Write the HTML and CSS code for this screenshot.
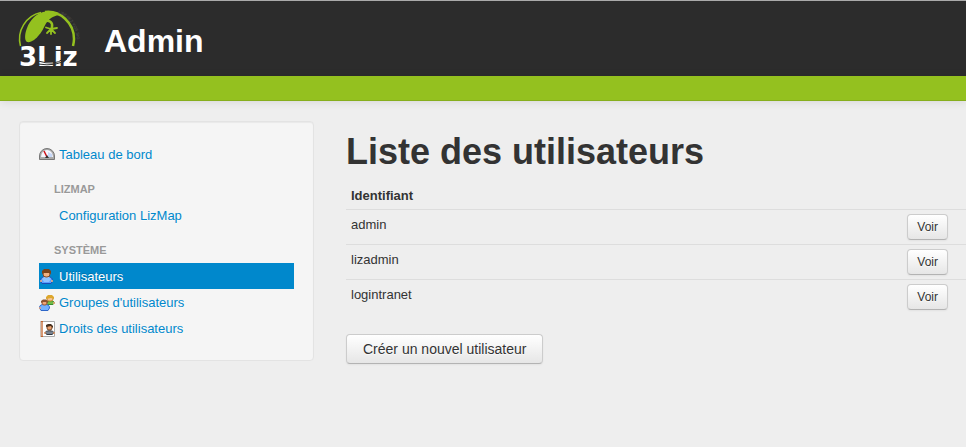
FILE: index.html
```
<!DOCTYPE html>
<html lang="fr">
<head>
<meta charset="UTF-8">
<meta name="viewport" content="width=device-width, initial-scale=1.0">
<title>Admin - Liste des utilisateurs</title>
<link rel="stylesheet" href="styles.css">
</head>
<body>
    <header class="header">
        <svg class="logo" width="64" height="64" viewBox="0 0 64 64" role="img" aria-label="3Liz">
            <defs>
                <path id="motto" d="M39 4 A29 29 0 0 1 57 38"/>
            </defs>
            <path d="M1.500 37A27 27 0 0 1 22 3.500" fill="none" stroke="#94c11f" stroke-width="1.500"/>
            <path d="M26 3C41 1 55 14 55 30C55 33 54.500 35 54 37" fill="none" stroke="#94c11f" stroke-width="2.500"/>
            <path d="M8 33C5 31 6 24 8 19C11 11 17 5 24 3C31 1 38 3 42 6C36 6 31 9 28 13C25 17 24 22 20 26C17 30 12 34 8 33Z" fill="#94c11f"/>
            <path d="M26 12C30 11 34 13 33 18L32 21" fill="none" stroke="#94c11f" stroke-width="2.500"/>
            <path d="M32 20L27 18.500M32 20L28 24M32 20L32 25M32 20L36 24M32 20L38 19" fill="none" stroke="#94c11f" stroke-width="1.800" stroke-linecap="round"/>
            <text class="logo-motto"><textPath href="#motto">LIBÉREZ VOS SIG</textPath></text>
            <text class="logo-name" x="0" y="57">3Liz</text>
            <path d="M19 52Q36 57 44 50M19 55Q38 58 48 50" fill="none" stroke="#2c2c2c" stroke-width="1"/>
        </svg>
        <h1 class="site-title">Admin</h1>
    </header>
    <div class="subheader"></div>

    <div class="container">
        <nav class="sidebar">
            <ul class="menu">
                <li><a href="#">
                    <svg class="icon" width="16" height="16" viewBox="0 0 16 16">
                        <path d="M.5 12.500V9A7.500 7.500 0 0 1 15.500 9V12.500Z" fill="#aaa" stroke="#777"/>
                        <path d="M2 10A6 7 0 0 1 14 10Z" fill="#f5f6ff"/>
                        <path d="M9 5L13 7V10H9Z" fill="#c5d7f8"/>
                        <path d="M5 4L8 10" stroke="#d1131b" stroke-width="1.500"/>
                        <path d="M6 11L8 8L10 11Z" fill="#333"/>
                    </svg>
                    Tableau de bord</a></li>
                <li class="menu-header">LizMap</li>
                <li><a href="#" class="no-icon">Configuration LizMap</a></li>
                <li class="menu-header">Système</li>
                <li><a href="#" class="active">
                    <svg class="icon" width="16" height="16" viewBox="0 0 16 16">
                        <path d="M1.500 12C1.500 8.500 4 7.500 7.500 7.500S13.500 8.500 13.500 12L12 14.500H3Z" fill="#5c9fff" stroke="#1c4db7"/>
                        <path d="M3 10L5 13H10L12 10L10 8H5Z" fill="#8fc3ff"/>
                        <circle cx="2" cy="12" r="1" fill="#f2b584"/>
                        <circle cx="13" cy="12" r="1" fill="#f2b584"/>
                        <rect x="4" y="2" width="7" height="6" rx="3" fill="#f0b183" stroke="#8a4a20"/>
                        <path d="M3 5V2L5 0H10L12 2V5L10 4H5Z" fill="#7a431b"/>
                    </svg>
                    Utilisateurs</a></li>
                <li><a href="#">
                    <svg class="icon" width="16" height="16" viewBox="0 0 16 16">
                        <path d="M7 9C8 5 15 5 15.500 8L14 9.500H7Z" fill="#6dbb49" stroke="#3c8d2e"/>
                        <rect x="8" y="1" width="6" height="5" rx="2" fill="#f7c596" stroke="#c58a2b"/>
                        <path d="M7 4V2L9 0H13L15 2V4L12 3Z" fill="#dda72e"/>
                        <path d="M.5 13C.5 10 2 9.500 5.500 9.500S10.500 10 10.500 13L9 15.500H2Z" fill="#73b1ff" stroke="#2d66c8"/>
                        <rect x="3" y="6" width="5" height="4" rx="2" fill="#f0a477" stroke="#9b5932"/>
                        <path d="M2 8V6L4 4.500H7L9 6V8L7 7H4Z" fill="#8c5230"/>
                        <circle cx="1" cy="13" r="1" fill="#f0a477"/>
                        <circle cx="15" cy="8" r="1" fill="#f0a477"/>
                    </svg>
                    Groupes d'utilisateurs</a></li>
                <li><a href="#">
                    <svg class="icon" width="16" height="16" viewBox="0 0 16 16">
                        <path d="M1.500 .5H15.500V15.500H1.500Z" fill="#fff" stroke="#aaa"/>
                        <path d="M3 0V16" stroke="#bd612c" stroke-width="2"/>
                        <path d="M1 2H4M1 4H4M1 6H4M1 8H4M1 10H4M1 12H4M1 14H4" stroke="#eed2bf"/>
                        <path d="M6 12C6 9 15 9 15 12L13 13.500H8Z" fill="#7a8390" stroke="#333b44"/>
                        <rect x="8" y="4" width="5" height="5" rx="2" fill="#e8a06f" stroke="#744320"/>
                        <path d="M7 6V4L9 3H12L14 5V7L12 5Z" fill="#47301f"/>
                        <circle cx="6" cy="12" r="1" fill="#d99060"/>
                        <circle cx="15" cy="12" r="1" fill="#d99060"/>
                    </svg>
                    Droits des utilisateurs</a></li>
            </ul>
        </nav>

        <main class="content">
            <h2 class="page-title">Liste des utilisateurs</h2>
            <table class="table">
                <thead>
                    <tr><th>Identifiant</th><th></th></tr>
                </thead>
                <tbody>
                    <tr><td>admin</td><td class="actions"><button class="btn btn-small">Voir</button></td></tr>
                    <tr><td>lizadmin</td><td class="actions"><button class="btn btn-small">Voir</button></td></tr>
                    <tr><td>logintranet</td><td class="actions"><button class="btn btn-small">Voir</button></td></tr>
                </tbody>
            </table>
            <button class="btn btn-large">Créer un nouvel utilisateur</button>
        </main>
    </div>
</body>
</html>
```
FILE: styles.css
```
* {
    box-sizing: border-box;
}
body {
    margin: 0;
    background: #eee;
    color: #333;
    font-family: "Liberation Sans", Arial, sans-serif;
    font-size: 13px;
    line-height: 20px;
}
.header {
    display: flex;
    align-items: center;
    gap: 21px;
    height: 76px;
    padding: 4px 19px 0;
    border-top: 1px solid #aaa;
    background: #2c2c2c;
}
.logo {
    overflow: visible;
}
.logo-name {
    fill: #fff;
    font-family: "DejaVu Sans", sans-serif;
    font-size: 26px;
    font-weight: bold;
}
.logo-motto {
    fill: #555;
    font-size: 4px;
}
.site-title {
    margin: 0;
    color: #fff;
    font-size: 32px;
    line-height: 40px;
}
.subheader {
    height: 25px;
    border-bottom: 1px solid #86ae1c;
    background: #94c11f;
    box-shadow: 0 1px 10px rgba(0, 0, 0, 0.1);
}
.container {
    display: flex;
    align-items: flex-start;
    gap: 32px;
    padding: 20px 0 20px 19px;
}
.sidebar {
    flex: 0 0 295px;
    padding: 19px;
    border: 1px solid #e3e3e3;
    border-radius: 4px;
    background: #f5f5f5;
    box-shadow: inset 0 1px 1px rgba(0, 0, 0, 0.05);
}
.menu {
    margin: 0;
    padding: 0;
    list-style: none;
}
.menu a {
    display: flex;
    align-items: center;
    gap: 4px;
    padding: 4px 0 2px;
    color: #08c;
    text-decoration: none;
    text-shadow: 0 1px 0 rgba(255, 255, 255, 0.5);
}
.menu a.no-icon {
    padding-left: 20px;
}
.menu a.active {
    background: #08c;
    color: #fff;
    text-shadow: 0 -1px 0 rgba(0, 0, 0, 0.2);
}
.menu-header {
    margin-top: 9px;
    padding: 3px 15px;
    color: #999;
    font-size: 11px;
    font-weight: bold;
    text-shadow: 0 1px 0 rgba(255, 255, 255, 0.5);
    text-transform: uppercase;
}
.icon {
    flex: none;
}
.content {
    flex: 1;
    padding-top: 11px;
}
.page-title {
    margin: 0 0 11px;
    font-size: 36px;
    line-height: 40px;
}
.table {
    width: 100%;
    margin-bottom: 20px;
    border-collapse: separate;
    border-spacing: 0;
}
.table th,
.table td {
    padding: 5px 5px 4px;
    text-align: left;
    vertical-align: top;
}
.table th {
    padding: 3px 5px;
}
.table td {
    border-top: 1px solid #ddd;
}
.table .actions {
    padding: 4px 18px 4px 5px;
    text-align: right;
}
.btn {
    border: 1px solid #ccc;
    border-bottom-color: #b3b3b3;
    border-radius: 4px;
    background: linear-gradient(#fff, #e6e6e6);
    box-shadow: inset 0 1px 0 rgba(255, 255, 255, 0.2), 0 1px 2px rgba(0, 0, 0, 0.05);
    color: #333;
    font-family: inherit;
    text-shadow: 0 1px 1px rgba(255, 255, 255, 0.75);
    cursor: pointer;
}
.btn-small {
    display: inline-block;
    height: 26px;
    padding: 0 9px;
    font-size: 12px;
    vertical-align: top;
}
.btn-large {
    height: 30px;
    padding: 0 16px;
    font-size: 14px;
}
```
